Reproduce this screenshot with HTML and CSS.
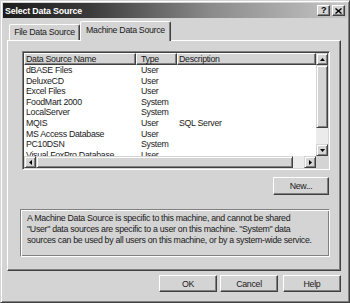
FILE: index.html
```html
<!DOCTYPE html>
<html>
<head>
<meta charset="utf-8">
<link rel="stylesheet" href="styles.css">
</head>
<body>
<div class="window">
  <div class="titlebar">
    <span class="title">Select Data Source</span>
    <div class="tb-btns">
      <div class="tb-btn q">?</div>
      <div class="tb-btn"><svg width="7" height="6" viewBox="0 0 7 6"><path d="M0.5 0.5 L6.5 5.5 M6.5 0.5 L0.5 5.5" stroke="#000" stroke-width="1.4"/></svg></div>
    </div>
  </div>
  <div class="body">
    <div class="tabs">
      <div class="tab file">File Data Source</div>
      <div class="tab active">Machine Data Source</div>
    </div>
    <div class="panel">
      <div class="listview">
        <div class="lv-top">
          <div class="lv-content">
            <div class="lv-header">
              <div class="hcell c1">Data Source Name</div>
              <div class="hcell c2">Type</div>
              <div class="hcell c3">Description</div>
            </div>
            <div class="rows">
              <div class="row"><span class="c1">dBASE Files</span><span class="c2">User</span><span class="c3"></span></div>
              <div class="row"><span class="c1">DeluxeCD</span><span class="c2">User</span><span class="c3"></span></div>
              <div class="row"><span class="c1">Excel Files</span><span class="c2">User</span><span class="c3"></span></div>
              <div class="row"><span class="c1">FoodMart 2000</span><span class="c2">System</span><span class="c3"></span></div>
              <div class="row"><span class="c1">LocalServer</span><span class="c2">System</span><span class="c3"></span></div>
              <div class="row"><span class="c1">MQIS</span><span class="c2">User</span><span class="c3">SQL Server</span></div>
              <div class="row"><span class="c1">MS Access Database</span><span class="c2">User</span><span class="c3"></span></div>
              <div class="row"><span class="c1">PC10DSN</span><span class="c2">System</span><span class="c3"></span></div>
              <div class="row"><span class="c1">Visual FoxPro Database</span><span class="c2">User</span><span class="c3"></span></div>
            </div>
          </div>
          <div class="vscroll">
            <div class="sb-btn"><svg width="5" height="3" viewBox="0 0 5 3"><polygon points="2.5,0 5,3 0,3" fill="#000"/></svg></div>
            <div class="sb-thumb v"></div>
            <div class="sb-track"></div>
            <div class="sb-btn"><svg width="5" height="3" viewBox="0 0 5 3"><polygon points="0,0 5,0 2.5,3" fill="#000"/></svg></div>
          </div>
        </div>
        <div class="hscroll-row">
          <div class="hscroll">
            <div class="sb-btn"><svg width="3" height="5" viewBox="0 0 3 5"><polygon points="3,0 3,5 0,2.5" fill="#000"/></svg></div>
            <div class="sb-thumb h"></div>
            <div class="sb-track"></div>
            <div class="sb-btn"><svg width="3" height="5" viewBox="0 0 3 5"><polygon points="0,0 3,2.5 0,5" fill="#000"/></svg></div>
          </div>
          <div class="corner"></div>
        </div>
      </div>
      <div class="new-row"><div class="btn new">New...</div></div>
      <div class="desc">A Machine Data Source is specific to this machine, and cannot be shared<br>"User" data sources are specific to a user on this machine. "System" data<br>sources can be used by all users on this machine, or by a system-wide service.</div>
    </div>
    <div class="buttons">
      <div class="btn ok">OK</div>
      <div class="btn cancel">Cancel</div>
      <div class="btn help">Help</div>
    </div>
  </div>
</div>
</body>
</html>
```
FILE: styles.css
```css
html, body {
  margin: 0;
  padding: 0;
  background: #d4d4d4;
}
body {
  font-family: "Liberation Sans", Arial, sans-serif;
  font-size: 8.8px;
  letter-spacing: -0.3px;
  color: #1a1a1a;
}
.window {
  width: 350px;
  height: 303px;
  box-sizing: border-box;
  border: 1px solid;
  border-color: #d4d4d4 #404040 #404040 #d4d4d4;
  box-shadow: inset 1px 1px #fff, inset -1px -1px #808080;
  padding: 2px;
  background: #d4d4d4;
  display: flex;
  flex-direction: column;
}
.titlebar {
  height: 15px;
  flex: none;
  display: flex;
  align-items: center;
  justify-content: space-between;
  padding: 0 2px;
  background: linear-gradient(to right, #1c1c1c 0%, #3a3a3a 25%, #8a8a8a 60%, #c6c6c6 100%);
  color: #fff;
}
.title {
  font-weight: bold;
  letter-spacing: -0.15px;
}
.tb-btns {
  display: flex;
  gap: 2px;
}
.tb-btn {
  width: 13px;
  height: 11px;
  box-sizing: border-box;
  background: #d4d4d4;
  border: 1px solid;
  border-color: #fff #404040 #404040 #fff;
  box-shadow: inset -1px -1px #808080;
  display: flex;
  align-items: center;
  justify-content: center;
  color: #000;
}
.tb-btn.q {
  font-weight: bold;
  font-size: 9px;
  line-height: 9px;
}
.body {
  flex: 1;
  display: flex;
  flex-direction: column;
  padding: 3px 6px 0 4px;
}
.tabs {
  height: 19px;
  flex: none;
  display: flex;
  align-items: flex-end;
  padding-left: 2px;
}
.tab {
  box-sizing: border-box;
  border: 1px solid;
  border-color: #fff #404040 transparent #fff;
  border-bottom: none;
  border-radius: 2px 2px 0 0;
  box-shadow: inset -1px 0 #808080;
  background: #d4d4d4;
  text-align: center;
  color: #1a1a1a;
  white-space: nowrap;
}
.tab.file {
  width: 71px;
  height: 16px;
  line-height: 15px;
}
.tab.active {
  width: 91px;
  height: 20px;
  line-height: 17px;
  margin-bottom: -1px;
  position: relative;
  z-index: 1;
}
.panel {
  height: 231px;
  flex: none;
  box-sizing: border-box;
  border: 1px solid;
  border-color: #fff #404040 #404040 #fff;
  box-shadow: inset -1px -1px #808080;
  padding: 10px 10px 0 14px;
  display: flex;
  flex-direction: column;
}
.listview {
  width: 308px;
  height: 119px;
  box-sizing: border-box;
  border: 1px solid;
  border-color: #808080 #fff #fff #808080;
  box-shadow: inset 1px 1px #404040, inset -1px -1px #d4d4d4;
  padding: 1px;
  background: #fff;
  display: flex;
  flex-direction: column;
}
.lv-top {
  height: 103px;
  display: flex;
  overflow: hidden;
}
.lv-content {
  flex: 1;
  overflow: hidden;
  background: #fff;
}
.lv-header {
  display: grid;
  grid-template-columns: 112px 41px 1fr;
  height: 12px;
}
.hcell {
  box-sizing: border-box;
  background: #d4d4d4;
  border: 1px solid;
  border-color: #fff #404040 #404040 #fff;
  box-shadow: inset -1px -1px #808080;
  line-height: 10px;
  padding-left: 1px;
  white-space: nowrap;
  overflow: hidden;
}
.hcell.c2 { padding-left: 4px; }
.rows {
  display: flex;
  flex-direction: column;
}
.row {
  display: grid;
  grid-template-columns: 112px 41px 1fr;
  height: 10.6px;
  line-height: 10.6px;
  white-space: nowrap;
  flex: none;
}
.row .c1 { padding-left: 2px; }
.row .c2 { padding-left: 5px; }
.row .c3 { padding-left: 2px; }
.vscroll {
  width: 12px;
  flex: none;
  display: flex;
  flex-direction: column;
  background: #d4d4d4;
}
.sb-btn {
  width: 12px;
  height: 12px;
  flex: none;
  box-sizing: border-box;
  background: #d4d4d4;
  border: 1px solid;
  border-color: #d4d4d4 #404040 #404040 #d4d4d4;
  box-shadow: inset 1px 1px #fff, inset -1px -1px #808080;
  display: flex;
  align-items: center;
  justify-content: center;
}
.sb-thumb {
  box-sizing: border-box;
  background: #d4d4d4;
  border: 1px solid;
  border-color: #d4d4d4 #404040 #404040 #d4d4d4;
  box-shadow: inset 1px 1px #fff, inset -1px -1px #808080;
}
.sb-thumb.v { height: 63px; flex: none; }
.sb-thumb.h { width: 257px; flex: none; }
.sb-track {
  flex: 1;
  background: #ebebeb;
}
.hscroll-row {
  height: 12px;
  display: flex;
}
.hscroll {
  flex: 1;
  display: flex;
  background: #d4d4d4;
}
.corner {
  width: 12px;
  background: #d4d4d4;
}
.new-row {
  display: flex;
  justify-content: flex-end;
  margin-top: 7px;
  width: 307px;
}
.btn {
  box-sizing: border-box;
  background: #d4d4d4;
  border: 1px solid;
  border-color: #fff #404040 #404040 #fff;
  box-shadow: inset -1px -1px #808080;
  display: flex;
  align-items: center;
  justify-content: center;
  color: #1a1a1a;
}
.btn.new {
  width: 56px;
  height: 18px;
}
.desc {
  margin-top: 14px;
  margin-left: -2px;
  width: 310px;
  height: 48px;
  box-sizing: border-box;
  border: 1px solid;
  border-color: #808080 #fff #fff #808080;
  box-shadow: inset 1px 1px #fff, inset -1px -1px #808080;
  padding: 3px 0 0 6px;
  line-height: 11px;
  white-space: nowrap;
}
.buttons {
  display: flex;
  justify-content: flex-end;
  margin-top: 4px;
}
.buttons .btn {
  width: 58px;
  height: 17px;
}
.btn.ok { margin-right: 3px; }
.btn.cancel { margin-right: 5px; }
```
